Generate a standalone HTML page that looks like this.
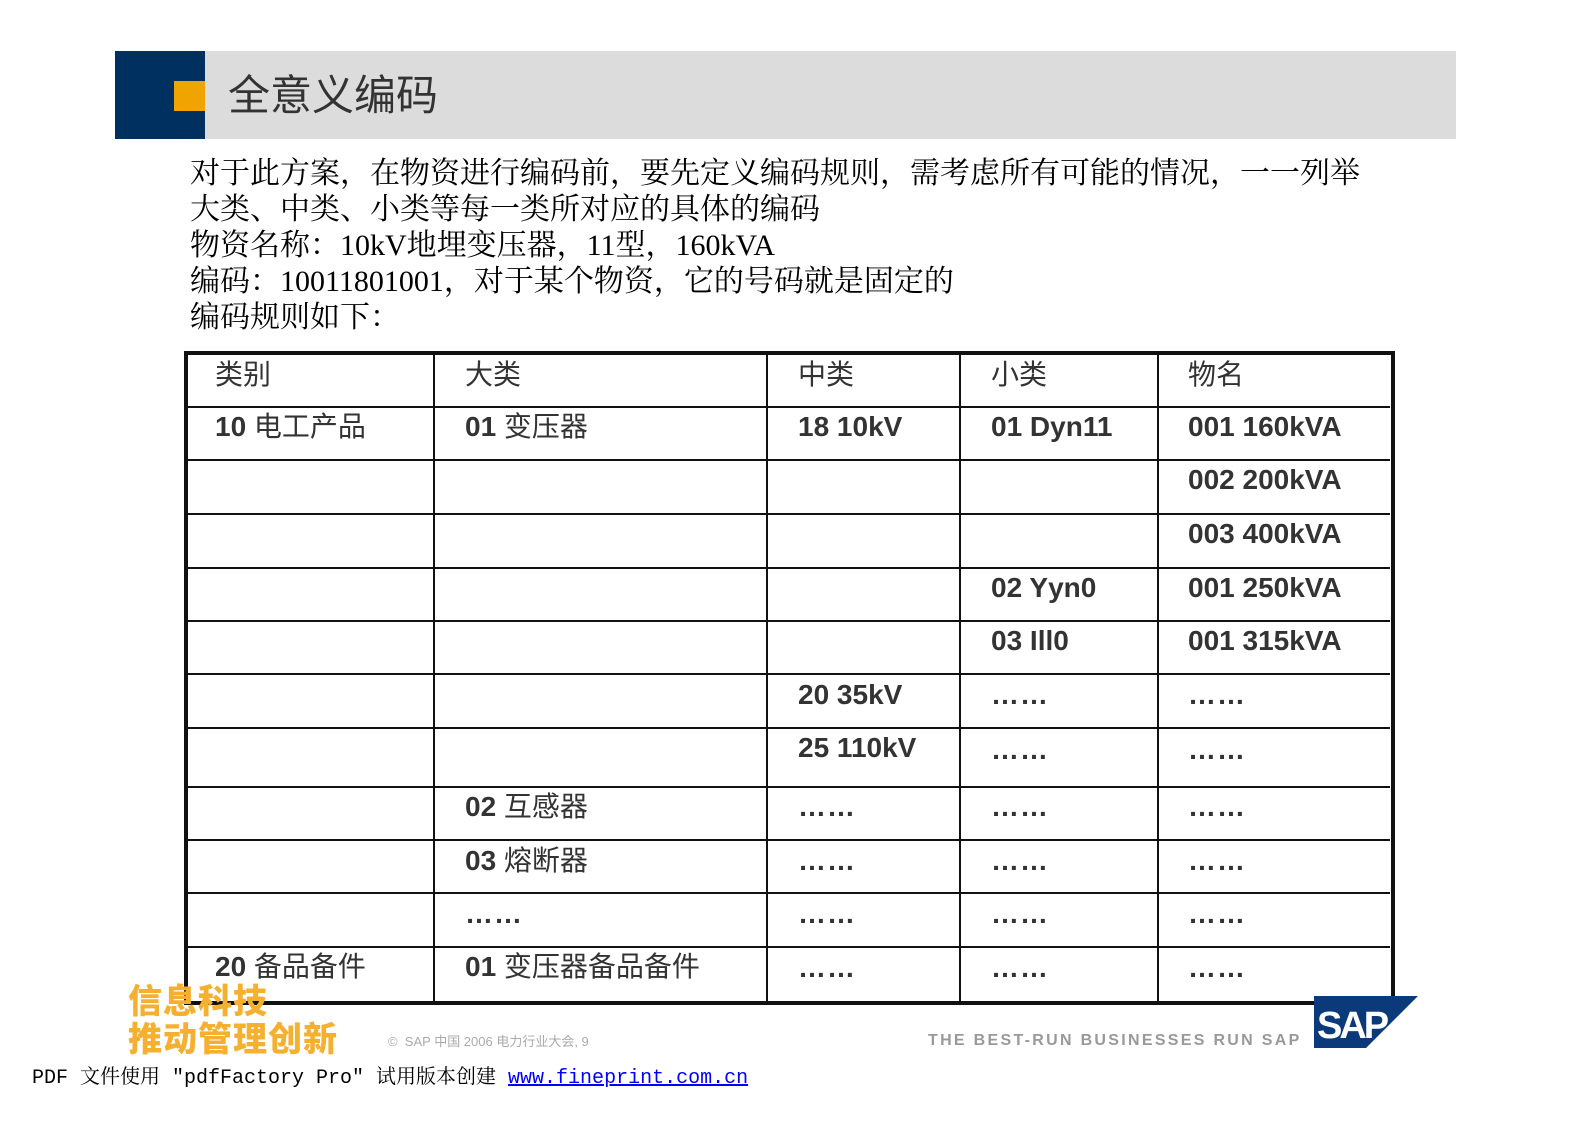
<!DOCTYPE html>
<html><head><meta charset="utf-8"><style>
body{margin:0;width:1587px;height:1123px;background:#fff;position:relative;overflow:hidden;font-family:"Liberation Sans","Noto Sans CJK SC",sans-serif;}
.a{position:absolute}
.h{position:absolute;left:185px;width:1205px;height:2px;background:#111}
.v{position:absolute;top:353px;height:648px;width:2px;background:#111}
.t{position:absolute;font-size:28px;color:#333;white-space:nowrap;line-height:34px}
.b{font-weight:bold}
.body{position:absolute;left:190px;top:156px;font-family:"Liberation Serif","Noto Serif CJK SC",serif;font-size:30px;line-height:36px;color:#000;white-space:nowrap}
.d{letter-spacing:1px}
</style></head><body>
<div class="a" style="left:115px;top:51px;width:1341px;height:88px;background:#dcdcdc"></div>
<div class="a" style="left:115px;top:51px;width:90px;height:88px;background:#00305f"></div>
<div class="a" style="left:174px;top:81px;width:31px;height:30px;background:#f0a400"></div>
<div class="a" style="left:228px;top:70px;font-size:42px;line-height:52px;color:#333;font-family:'Liberation Sans','Noto Sans CJK SC',sans-serif">全意义编码</div>

<div class="body">对于此方案，在物资进行编码前，要先定义编码规则，需考虑所有可能的情况，一一列举<br>大类、中类、小类等每一类所对应的具体的编码<br>物资名称：10kV地埋变压器，11型，160kVA<br>编码：10011801001，对于某个物资，它的号码就是固定的<br>编码规则如下：</div>

<div class="a" style="left:184px;top:351px;width:1203px;height:646px;border:4px solid #111"></div>
<div class="h" style="top:406px"></div><div class="h" style="top:459px"></div><div class="h" style="top:513px"></div><div class="h" style="top:567px"></div><div class="h" style="top:620px"></div><div class="h" style="top:673px"></div><div class="h" style="top:727px"></div><div class="h" style="top:786px"></div><div class="h" style="top:839px"></div><div class="h" style="top:892px"></div><div class="h" style="top:946px"></div>
<div class="v" style="left:433px"></div><div class="v" style="left:766px"></div><div class="v" style="left:959px"></div><div class="v" style="left:1157px"></div>

<div class="t" style="left:215px;top:358px">类别</div>
<div class="t" style="left:465px;top:358px">大类</div>
<div class="t" style="left:798px;top:358px">中类</div>
<div class="t" style="left:991px;top:358px">小类</div>
<div class="t" style="left:1188px;top:358px">物名</div>

<div class="t" style="left:215px;top:410px"><b>10</b> 电工产品</div>
<div class="t" style="left:465px;top:410px"><b>01</b> 变压器</div>
<div class="t b" style="left:798px;top:410px">18 10kV</div>
<div class="t b" style="left:991px;top:410px">01 Dyn11</div>
<div class="t b" style="left:1188px;top:410px">001 160kVA</div>
<div class="t b" style="left:1188px;top:463px">002 200kVA</div>
<div class="t b" style="left:1188px;top:517px">003 400kVA</div>
<div class="t b" style="left:991px;top:571px">02 Yyn0</div>
<div class="t b" style="left:1188px;top:571px">001 250kVA</div>
<div class="t b" style="left:991px;top:624px">03 Ill0</div>
<div class="t b" style="left:1188px;top:624px">001 315kVA</div>
<div class="t b" style="left:798px;top:678px">20 35kV</div>
<div class="t b d" style="left:991px;top:678px">……</div>
<div class="t b d" style="left:1188px;top:678px">……</div>
<div class="t b" style="left:798px;top:731px">25 110kV</div>
<div class="t b d" style="left:991px;top:733px">……</div>
<div class="t b d" style="left:1188px;top:733px">……</div>
<div class="t" style="left:465px;top:790px"><b>02</b> 互感器</div>
<div class="t b d" style="left:798px;top:790px">……</div>
<div class="t b d" style="left:991px;top:790px">……</div>
<div class="t b d" style="left:1188px;top:790px">……</div>
<div class="t" style="left:465px;top:844px"><b>03</b> 熔断器</div>
<div class="t b d" style="left:798px;top:844px">……</div>
<div class="t b d" style="left:991px;top:844px">……</div>
<div class="t b d" style="left:1188px;top:844px">……</div>
<div class="t b d" style="left:465px;top:897px">……</div>
<div class="t b d" style="left:798px;top:897px">……</div>
<div class="t b d" style="left:991px;top:897px">……</div>
<div class="t b d" style="left:1188px;top:897px">……</div>
<div class="t" style="left:215px;top:950px"><b>20</b> 备品备件</div>
<div class="t" style="left:465px;top:950px"><b>01</b> 变压器备品备件</div>
<div class="t b d" style="left:798px;top:951px">……</div>
<div class="t b d" style="left:991px;top:951px">……</div>
<div class="t b d" style="left:1188px;top:951px">……</div>

<div class="a" style="left:128px;top:980px;font-size:34px;line-height:38px;font-weight:900;color:#f5b030;font-family:'Noto Sans CJK SC',sans-serif;letter-spacing:1px">信息科技<br>推动管理创新</div>
<div class="a" style="left:388px;top:1031px;font-size:13px;color:#aaa">©&nbsp; SAP 中国 2006 电力行业大会, 9</div>
<div class="a" style="left:928px;top:1032px;font-size:16px;font-weight:bold;color:#999;letter-spacing:2.3px">THE BEST-RUN BUSINESSES RUN SAP</div>
<svg class="a" style="left:1314px;top:996px" width="104" height="52" viewBox="0 0 104 52"><polygon points="0,0 104,0 52,52 0,52" fill="#0b3a7a"/><text x="3" y="42" font-family="Liberation Sans" font-weight="bold" font-size="38" fill="#fff" letter-spacing="-3">SAP</text></svg>
<div class="a" style="left:32px;top:1066px;font-size:20px;line-height:26px;font-family:'Liberation Mono','Noto Serif CJK SC',monospace;color:#000;white-space:nowrap">PDF 文件使用 "pdfFactory Pro" 试用版本创建 <span style="color:#00f;text-decoration:underline">www.fineprint.com.cn</span></div>
</body></html>
